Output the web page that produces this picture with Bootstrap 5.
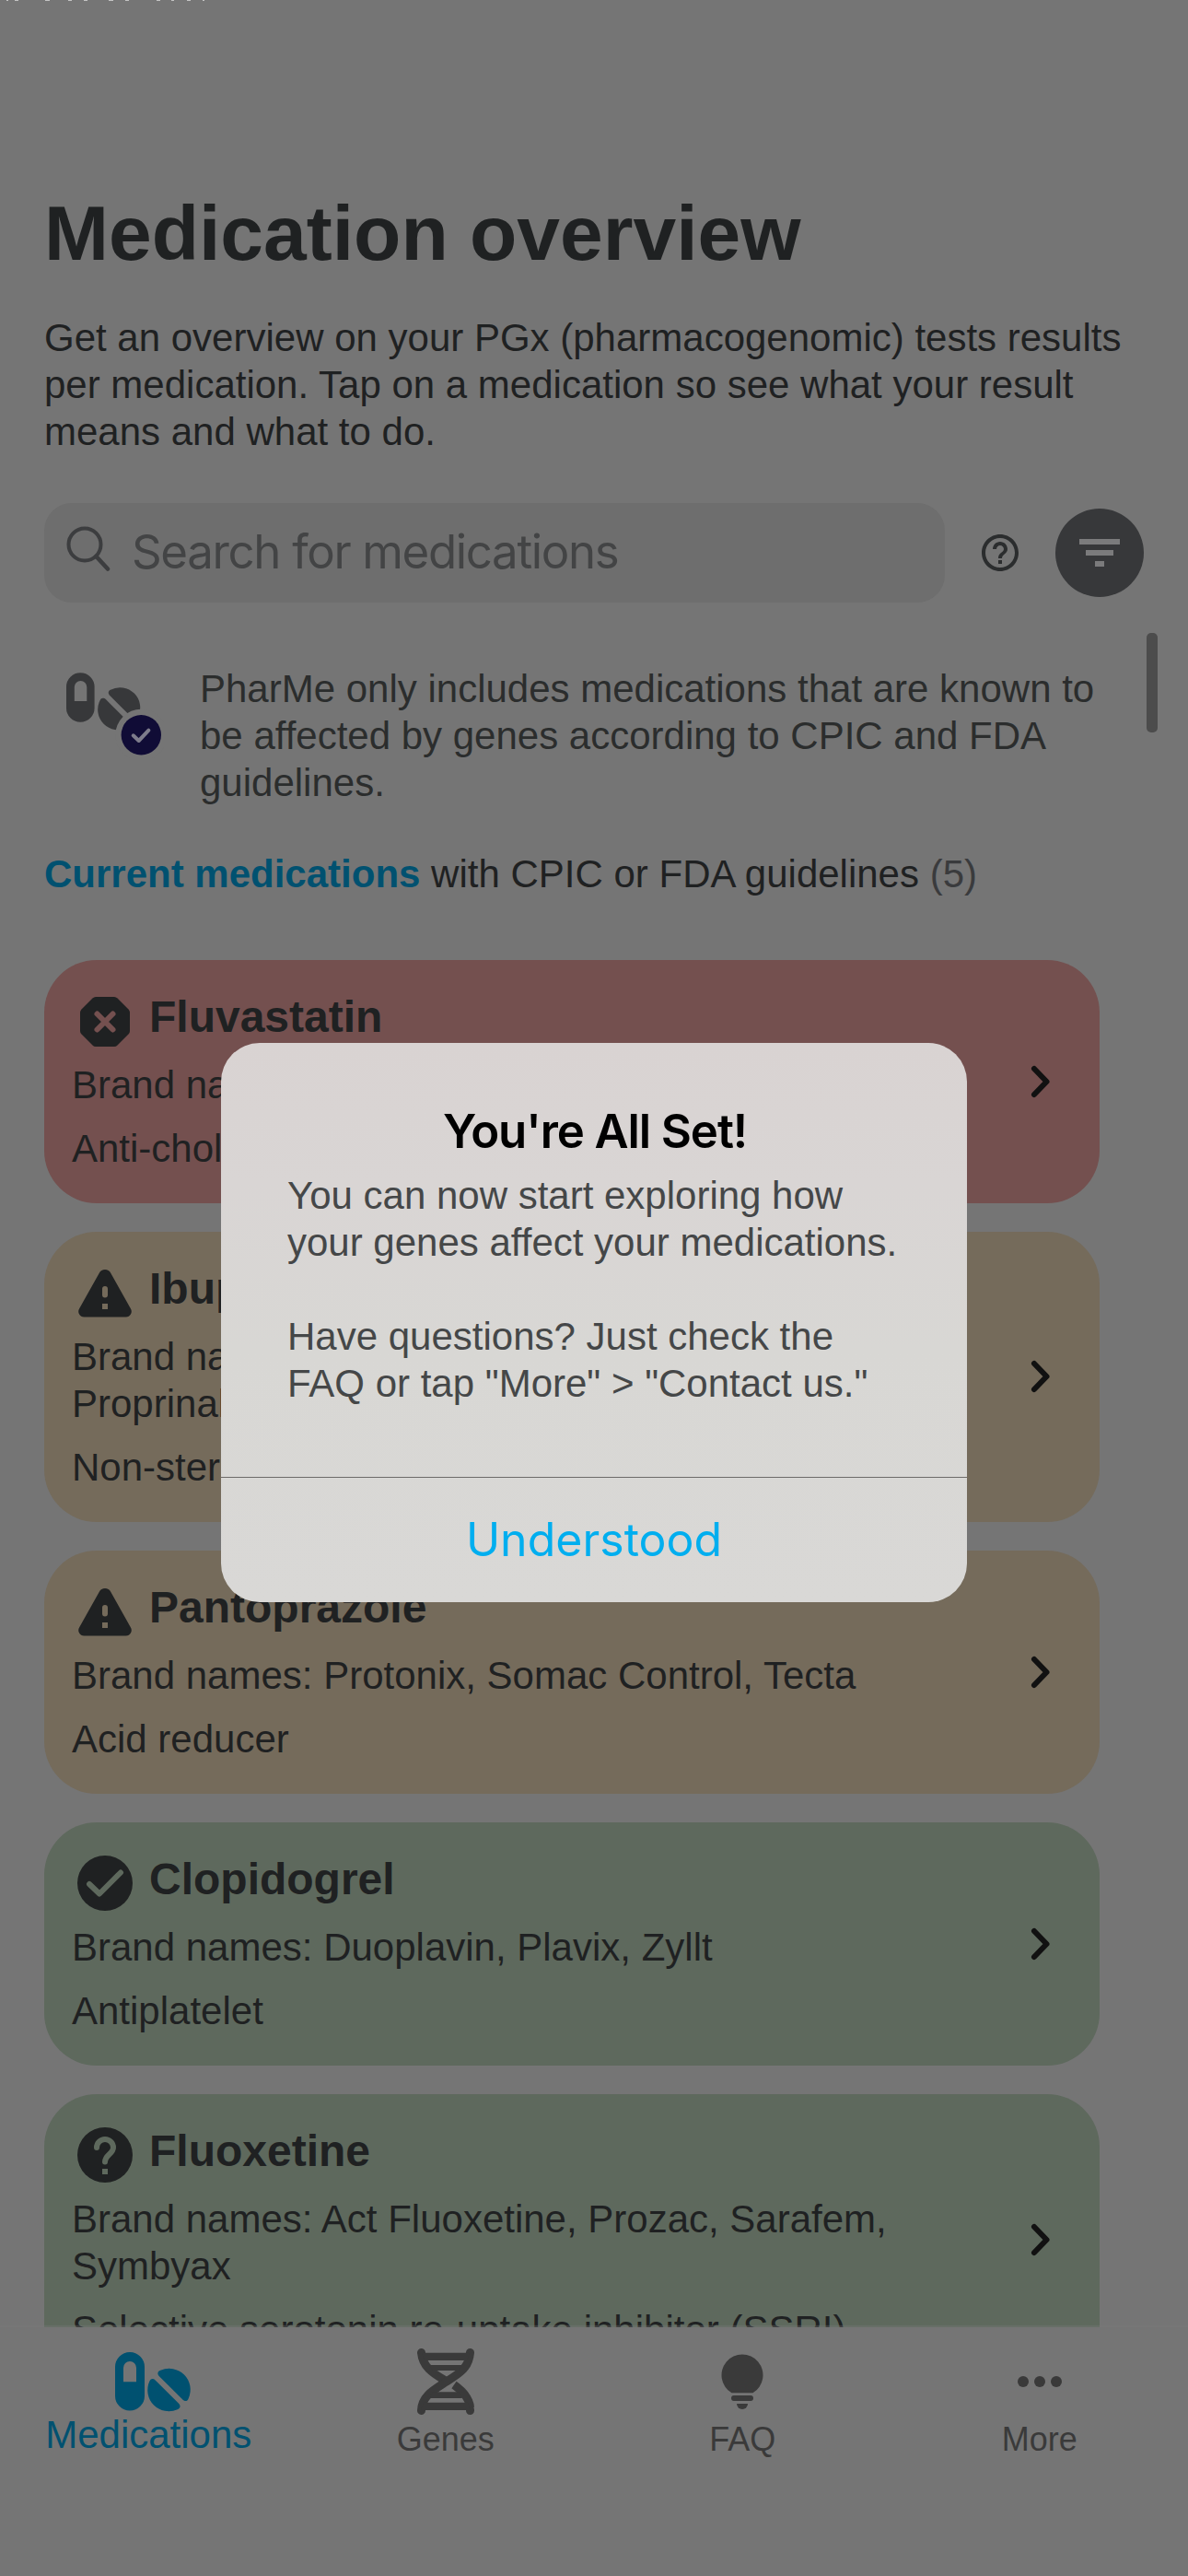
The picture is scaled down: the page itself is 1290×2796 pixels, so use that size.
<!DOCTYPE html>
<html lang="en">
<head>
<meta charset="utf-8">
<meta name="viewport" content="width=device-width, initial-scale=1">
<title>Medication overview</title>
<link href="https://cdn.jsdelivr.net/npm/bootstrap@5.3.0/dist/css/bootstrap.min.css" rel="stylesheet">
<style>
  body { background: #757575; color: #1f2122; font-family: "Liberation Sans", Arial, sans-serif; font-size: 42px; line-height: 51px; margin: 0; }
  .app { width: 1290px; height: 2796px; overflow: hidden; background: #757575; }
  svg { display: block; flex: none; }
  .status { height: 205px; }
  .screen-title { font-size: 84px; line-height: 96px; font-weight: 700; margin: 0; }
  .intro { margin-top: 40px; }
  .side { padding-left: 48px; padding-right: 48px; }
  .tools { margin-top: 52px; height: 108px; }
  .search-box { width: 978px; height: 108px; border-radius: 30px; background: #6e6e6e; padding-left: 23px; }
  .search-box svg { margin-bottom: 9px; }
  .search-hint { color: #434445; font-family: Inter, "Liberation Sans", sans-serif; font-size: 51px; letter-spacing: -1.35px; margin-left: 22px; padding-bottom: 3px; }
  .help-btn { margin-left: 36px; }
  .filter-btn { width: 96px; height: 96px; border-radius: 50%; background: #37383a; }
  .note { color: #2b2d2d; margin-top: 68px; height: 153px; }
  .note-icon { width: 169px; padding: 1px 0 0 20px; }
  .section-line { margin-top: 48px; }
  .section-line b { color: #005170; }
  .count { color: #3a3b3d; }
  .med-list { margin-top: 67.5px; gap: 31.2px; width: 1146px; }
  .med { border-radius: 57px; height: 264px; padding: 32px 0 0 30px; }
  .med.tall { height: 315px; }
  .red { background: #74504f; } .tan { background: #756b5b; } .green { background: #5e695d; }
  .med-name { font-size: 48px; line-height: 60px; font-weight: 700; margin-left: 18px; }
  .med-head { height: 60px; margin-left: 6px; }
  .med-head svg { margin-top: 9px; }
  .med-head svg.stop { margin-top: 8px; }
  .med-head svg.round { margin-top: 4px; }
  .med-brand { margin-top: 18px; }
  .med-class { margin-top: 18px; white-space: nowrap; }
  .med-go { width: 129px; padding-bottom: 32px; }
  .scrollbar-thumb { position: absolute; left: 1245px; top: 687px; width: 12px; height: 108px; border-radius: 5px; background: #4c4c4c; }
  .tabs { position: absolute; left: 0; right: 0; top: 2526px; height: 270px; background: #757575; box-shadow: 0 -2px 1px #7a7a7a55; color: #3a3a3a; font-size: 36px; line-height: 45px; }
  .tab-on { color: #005170; font-size: 42px; line-height: 36px; }
  .tab-item { width: 25%; padding-top: 19px; }
  .dialog { position: absolute; left: 240px; top: 1132px; width: 810px; height: 606.5px; border-radius: 42px; background: linear-gradient(#d9d3d2, #d9d5d4 25%, #d8d7d4 55%, #d9d8d6); }
  .dialog-title { font-family: Inter, "Liberation Sans", sans-serif; font-weight: 600; font-size: 51px; line-height: 60px; letter-spacing: -1.1px; color: #000; padding: 66px 0 0 2px; }
  .dialog-text { color: #454748; padding: 14px 0 0 72px; height: 345px; white-space: nowrap; }
  .dialog-ok { height: 135px; border-top: 1px solid #6d6b69; color: #00aeef; font-family: Inter, "Liberation Sans", sans-serif; font-size: 50px; }
  .top-marks { position: absolute; left: 0; top: 0; }
</style>
</head>
<body>
<svg width="0" height="0" class="position-absolute">
  <defs>
    <symbol id="warn" viewBox="0 0 60 54"><path fill="#1f2122" fill-rule="evenodd" d="M23.800 3.800a7 7 0 0 1 12.400 0l21.600 38.500a6 6 0 0 1-5.300 9.200H7.500a6 6 0 0 1-5.300-9.200zM27 21v6.500a3 3 0 0 0 6 0V21a3 3 0 0 0-6 0zM27 37v6h6v-6z"/></symbol>
    <symbol id="go" viewBox="0 0 24 38"><path d="M5 5l13.500 14L5 33" fill="none" stroke="#111" stroke-width="6" stroke-linecap="round" stroke-linejoin="round"/></symbol>
  </defs>
</svg>
<main class="app position-relative">
  <svg class="top-marks" width="240" height="1"><path stroke="#c4c4c4" d="M7 .5h2M16 .5h4M49 .5h5M74 .5h4M91 .5h4M118 .5h5M136 .5h4M170 .5h4M186 .5h3M203 .5h4M220 .5h2"/></svg>
  <div class="status"></div>
  <header class="side">
    <h1 class="screen-title">Medication overview</h1>
    <div class="intro text-nowrap">Get an overview on your PGx (pharmacogenomic) tests results<br>per medication. Tap on a medication so see what your result<br>means and what to do.</div>
    <div class="tools d-flex align-items-center">
      <div class="search-box d-flex align-items-center">
        <svg width="50" height="50" viewBox="0 0 50 50"><circle cx="21" cy="20" r="17.500" fill="none" stroke="#3c3d3f" stroke-width="4"/><path d="M33.500 33L46 46.500" stroke="#3c3d3f" stroke-width="4.600" stroke-linecap="round"/></svg>
        <span class="search-hint">Search for medications</span>
      </div>
      <svg class="help-btn" width="48" height="48" viewBox="0 0 24 24" fill="#2b2d2e"><path d="M11 18h2v-2h-2v2zm1-16C6.480 2 2 6.480 2 12s4.480 10 10 10 10-4.480 10-10S17.520 2 12 2zm0 18c-4.410 0-8-3.590-8-8s3.590-8 8-8 8 3.590 8 8-3.590 8-8 8zm0-14c-2.210 0-4 1.790-4 4h2c0-1.100.9-2 2-2s2 .9 2 2c0 2-3 1.750-3 5h2c0-2.250 3-2.500 3-5 0-2.210-1.790-4-4-4z"/></svg>
      <div class="filter-btn d-flex align-items-center justify-content-center ms-auto"><svg width="44" height="30" fill="#7b7b7c"><path d="M0 0h44v6H0zM7 12h30v6H7zM17 24h10v6H17z"/></svg></div>
    </div>
  </header>
  <section class="side">
    <div class="note d-flex">
      <div class="note-icon">
        <svg width="110" height="100" viewBox="0 0 110 100">
          <path fill="#37383a" fill-rule="evenodd" d="M4 22.500a15.300 15.300 0 0 1 30.600 0v23a15.300 15.300 0 0 1-30.600 0zM12.800 38h13.500V22.700a6.750 6.750 0 0 0-13.500 0z"/>
          <g fill="#37383a" transform="translate(61.200 46.200) rotate(45)"><path d="M-17-3C-20.500-3-22-5.500-21-8A22 22 0 0 1 21-8C22-5.500 20.500-3 17-3z"/><path d="M-17 3C-20.500 3-22 5.500-21 8A22 22 0 0 0 21 8C22 5.500 20.500 3 17 3z"/></g>
          <circle cx="85.300" cy="74.700" r="28" fill="#757575"/><circle cx="85.300" cy="74.700" r="21.700" fill="#100c36"/>
          <path d="M76.700 75.300l6 5.700 10.700-11.300" fill="none" stroke="#7d7c8b" stroke-width="4" stroke-linecap="round" stroke-linejoin="round"/>
        </svg>
      </div>
      <div class="text-nowrap">PharMe only includes medications that are known to<br>be affected by genes according to CPIC and FDA<br>guidelines.</div>
    </div>
    <div class="section-line"><b>Current medications</b> with CPIC or FDA guidelines <span class="count">(5)</span></div>
    <div class="med-list d-flex flex-column">
      <article class="med red d-flex justify-content-between">
        <div>
          <div class="med-head d-flex"><svg class="stop" width="60" height="54" viewBox="0 0 60 54"><path fill="#1f2122" d="M20 0h20q2 0 3.500 1.500l12 12Q57 15 57 17v20q0 2-1.500 3.500l-12 12Q42 54 40 54H20q-2 0-3.500-1.500l-12-12Q3 39 3 37V17q0-2 1.500-3.500l12-12Q18 0 20 0z"/><path d="M21.500 18.500l17 17m0-17l-17 17" stroke="#74504f" stroke-width="6" stroke-linecap="round"/></svg><h2 class="med-name mb-0">Fluvastatin</h2></div>
          <div class="med-brand">Brand na</div>
          <div class="med-class">Anti-chol</div>
        </div>
        <div class="med-go d-flex align-items-center justify-content-center"><svg width="24" height="38"><use href="#go"/></svg></div>
      </article>
      <article class="med tan tall d-flex justify-content-between">
        <div>
          <div class="med-head d-flex"><svg width="60" height="54"><use href="#warn"/></svg><h2 class="med-name mb-0">Ibup</h2></div>
          <div class="med-brand">Brand na<br>Proprinal</div>
          <div class="med-class">Non-ster</div>
        </div>
        <div class="med-go d-flex align-items-center justify-content-center"><svg width="24" height="38"><use href="#go"/></svg></div>
      </article>
      <article class="med tan d-flex justify-content-between">
        <div>
          <div class="med-head d-flex"><svg width="60" height="54"><use href="#warn"/></svg><h2 class="med-name mb-0">Pantoprazole</h2></div>
          <div class="med-brand">Brand names: Protonix, Somac Control, Tecta</div>
          <div class="med-class">Acid reducer</div>
        </div>
        <div class="med-go d-flex align-items-center justify-content-center"><svg width="24" height="38"><use href="#go"/></svg></div>
      </article>
      <article class="med green d-flex justify-content-between">
        <div>
          <div class="med-head d-flex"><svg class="round" width="60" height="60" viewBox="0 0 60 60"><circle cx="30" cy="30" r="30" fill="#1f2122"/><path d="M13 31l11 10.500L47 18.500" fill="none" stroke="#5e695d" stroke-width="6" stroke-linecap="round" stroke-linejoin="round"/></svg><h2 class="med-name mb-0">Clopidogrel</h2></div>
          <div class="med-brand">Brand names: Duoplavin, Plavix, Zyllt</div>
          <div class="med-class">Antiplatelet</div>
        </div>
        <div class="med-go d-flex align-items-center justify-content-center"><svg width="24" height="38"><use href="#go"/></svg></div>
      </article>
      <article class="med green tall d-flex justify-content-between">
        <div>
          <div class="med-head d-flex"><svg class="round" width="60" height="60" viewBox="2 2 20 20"><circle cx="12" cy="12" r="10" fill="#1f2122"/><path d="M9 9.300a3 3 0 0 1 6 0c0 2.300-3 2.600-3 5.200" fill="none" stroke="#5e695d" stroke-width="2" stroke-linecap="round"/><path d="M11 17h2v2h-2z" fill="#5e695d"/></svg><h2 class="med-name mb-0">Fluoxetine</h2></div>
          <div class="med-brand">Brand names: Act Fluoxetine, Prozac, Sarafem,<br>Symbyax</div>
          <div class="med-class">Selective serotonin re-uptake inhibitor (SSRI)</div>
        </div>
        <div class="med-go d-flex align-items-center justify-content-center"><svg width="24" height="38"><use href="#go"/></svg></div>
      </article>
    </div>
  </section>
  <div class="scrollbar-thumb"></div>
  <nav class="tabs d-flex text-center">
    <div class="tab-item tab-on d-flex flex-column align-items-center">
      <svg width="84" height="80" viewBox="-4 0 84 80" overflow="visible"><path fill="#005170" fill-rule="evenodd" d="M2 24a16 16 0 0 1 32 0v31.500a16 16 0 0 1-32 0V24zM11 40.200h14V25a7 7 0 0 0-14 0z"/><g fill="#005170" transform="translate(60.500 49) rotate(45)"><path d="M-18-3C-21.500-3-23-5.500-21.500-8.500A23 23 0 0 1 21.500-8.500C23-5.500 21.500-3 18-3z"/><path d="M-18 3C-21.500 3-23 5.500-21.500 8.500A23 23 0 0 0 21.500 8.500C23 5.500 21.500 3 18 3z"/></g></svg>
      <span>Medications</span>
    </div>
    <div class="tab-item d-flex flex-column align-items-center">
      <svg width="64" height="80" viewBox="0 0 64 80"><g fill="none" stroke="#3a3a3a" stroke-width="9"><path stroke-linecap="round" d="M5.500 8.500C7 24 18 31 30 38"/><path d="M41 43.500C53 52 58 61 58.500 68"/><path stroke-linecap="round" d="M58.500 71.500v-1"/><path stroke-linecap="round" d="M58.500 8.500C57 26 46 31.500 32 40.500C18 49.500 6 56 5.500 71.500"/></g><path fill="#3a3a3a" d="M6 8.700h52l-3 8.300H9zM14 22h36l-4 6H18zM18 51.300h28l4 6.700H14zM8 62.700h48l3 8.300H5z"/></svg>
      <span>Genes</span>
    </div>
    <div class="tab-item d-flex flex-column align-items-center">
      <svg width="50" height="80" viewBox="0 0 50 80" fill="#3a3a3a"><path d="M13.500 52.300a22.500 22.500 0 1 1 23 0z"/><rect x="13" y="55" width="24" height="6" rx="3"/><path d="M19 64h12a6 6 0 0 1-12 0z"/></svg>
      <span>FAQ</span>
    </div>
    <div class="tab-item d-flex flex-column align-items-center">
      <svg width="50" height="80" viewBox="0 0 50 80" fill="#3a3a3a"><circle cx="7" cy="40" r="6"/><circle cx="25" cy="40" r="6"/><circle cx="43" cy="40" r="6"/></svg>
      <span>More</span>
    </div>
  </nav>
  <section class="dialog" role="dialog">
    <div class="dialog-title text-center">You're All Set!</div>
    <div class="dialog-text">You can now start exploring how<br>your genes affect your medications.<br><br>Have questions? Just check the<br>FAQ or tap "More" &gt; "Contact us."</div>
    <div class="dialog-ok d-flex align-items-center justify-content-center">Understood</div>
  </section>
</main>
<script src="https://cdn.jsdelivr.net/npm/bootstrap@5.3.0/dist/js/bootstrap.bundle.min.js"></script>
</body>
</html>
